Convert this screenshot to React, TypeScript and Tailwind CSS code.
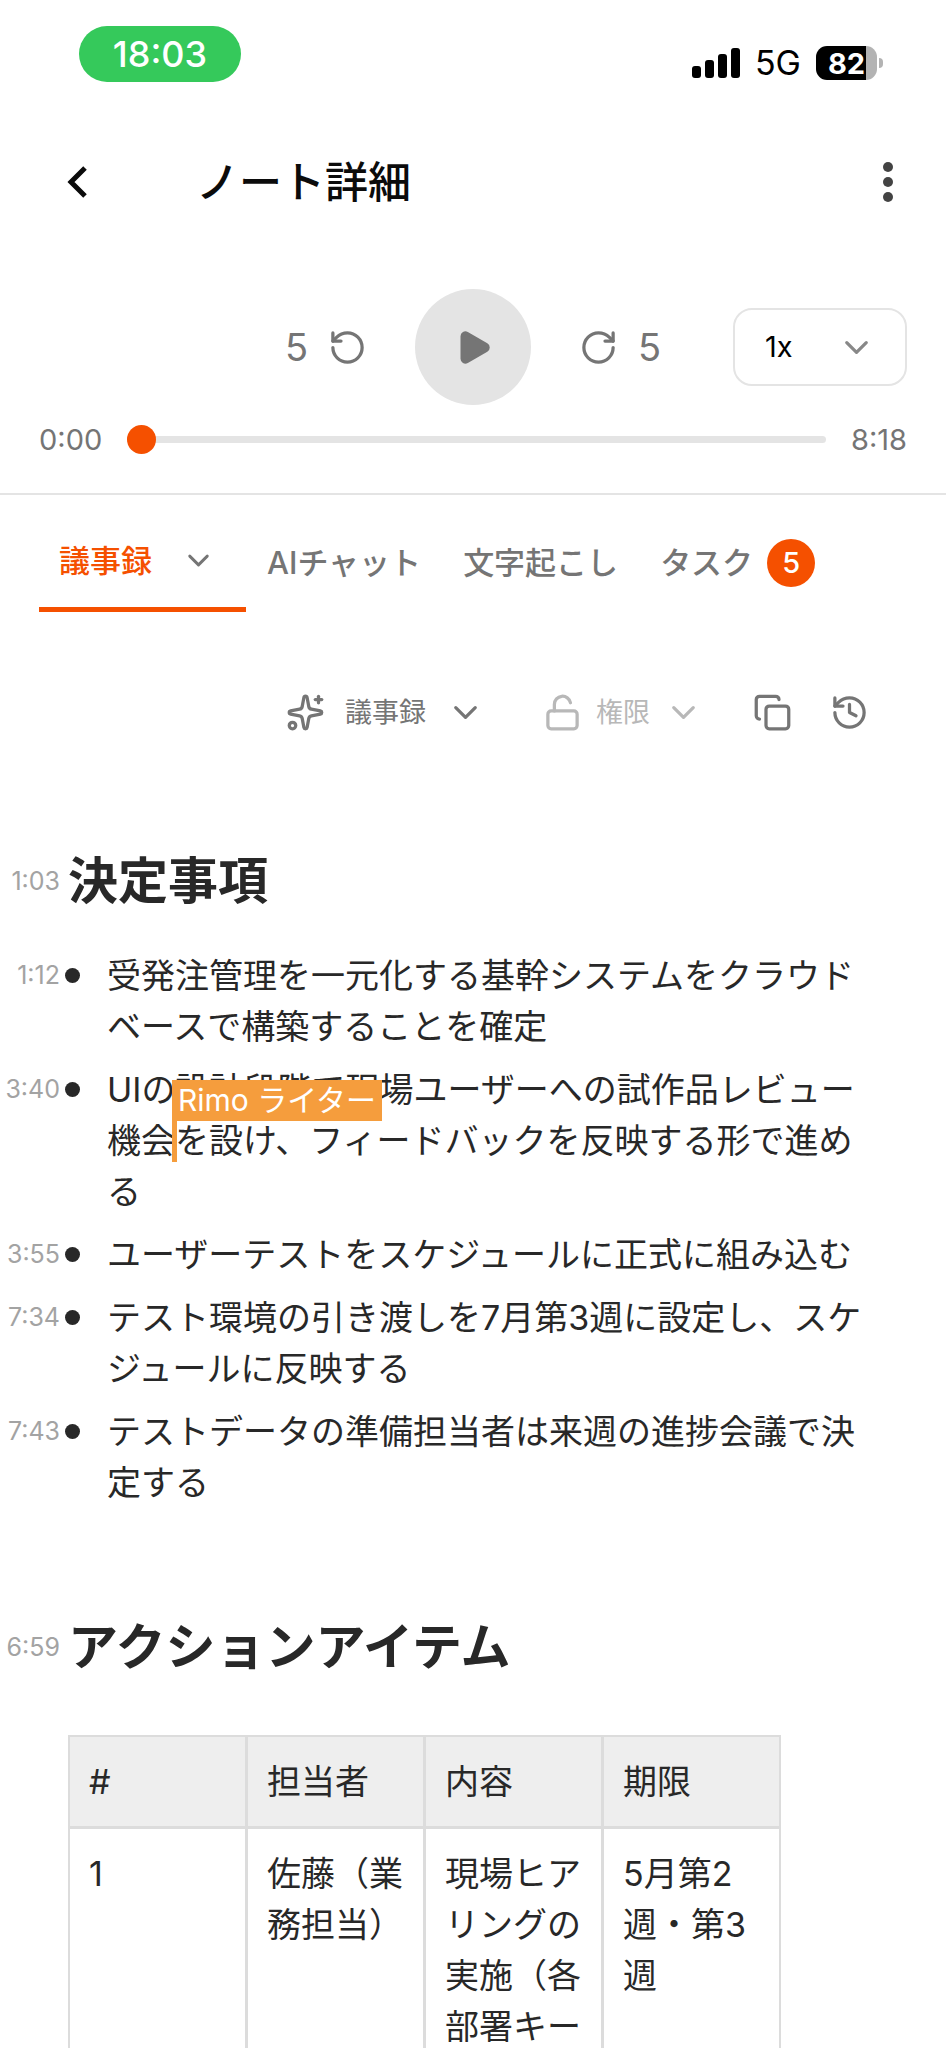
import { useState } from 'react'
import {
  ChevronDown,
  Copy,
  History,
  LockOpen,
  Play,
  RotateCcw,
  RotateCw,
  Sparkles,
} from 'lucide-react'

const decisions = [
  { time: '1:12', text: '受発注管理を一元化する基幹システムをクラウドベースで構築することを確定' },
  {
    time: '3:40',
    text: 'UIの設計段階で現場ユーザーへの試作品レビュー機会',
    rest: 'を設け、フィードバックを反映する形で進める',
  },
  { time: '3:55', text: 'ユーザーテストをスケジュールに正式に組み込む' },
  { time: '7:34', text: 'テスト環境の引き渡しを7月第3週に設定し、スケジュールに反映する' },
  { time: '7:43', text: 'テストデータの準備担当者は来週の進捗会議で決定する' },
]

const columns = ['#', '担当者', '内容', '期限']

const actionItems = [['1', '佐藤（業務担当）', '現場ヒアリングの実施（各部署キー', '5月第2週・第3週']]

function StatusBar() {
  return (
    <div className="flex h-[110px] items-start justify-between pl-[79px] pr-[63px]">
      <div className="mt-[26px] flex h-[56px] w-[162px] items-center justify-center rounded-full bg-[#35c95b] text-[36px] font-medium leading-none text-white">
        18:03
      </div>
      <div className="mt-[46px] flex h-[34px] items-center">
        <svg width="48" height="32" viewBox="0 0 48 32" aria-hidden="true">
          <rect x="0" y="19" width="9" height="12" rx="3" />
          <rect x="13" y="13" width="9" height="18" rx="3" />
          <rect x="26" y="7" width="9" height="24" rx="3" />
          <rect x="39" y="1" width="9" height="30" rx="3" />
        </svg>
        <span className="ml-[15px] text-[34px] leading-none text-black">5G</span>
        <div className="ml-[15px] flex items-center gap-[2px]">
          <div className="flex h-[34px] w-[61px] items-center justify-center rounded-[11px] bg-[linear-gradient(to_right,#000_50px,#b3b3b3_50px)] text-[29px] font-bold leading-none text-white">
            82
          </div>
          <div className="h-[10px] w-1 rounded-r-full bg-[#b3b3b3]" />
        </div>
      </div>
    </div>
  )
}

function Header() {
  return (
    <header className="flex h-36 items-center px-[52px]">
      <button type="button" aria-label="戻る" className="flex w-[48px] justify-center">
        <svg width="48" height="48" viewBox="0 0 48 48" fill="none" stroke="#0b0b0b" strokeWidth="5">
          <path d="M33 10 19 24l14 14" />
        </svg>
      </button>
      <h1 className="ml-[96px] text-[43px] font-medium leading-none text-[#0b0b0b]">ノート詳細</h1>
      <button type="button" aria-label="メニュー" className="ml-auto">
        <svg width="12" height="40" viewBox="0 0 12 40" fill="#434343">
          <circle cx="6" cy="5" r="5" />
          <circle cx="6" cy="20" r="5" />
          <circle cx="6" cy="35" r="5" />
        </svg>
      </button>
    </header>
  )
}

function Player() {
  const [position, setPosition] = useState(0)

  return (
    <section className="border-b-2 border-[#e4e4e4] px-[39px] pb-5 pt-[35px] text-[#757575]">
      <div className="grid grid-cols-[1fr_auto_1fr] items-center gap-12">
        <button type="button" className="flex items-center gap-5 justify-self-end text-[38px] leading-none">
          5
          <RotateCcw size={39} />
        </button>
        <button
          type="button"
          aria-label="再生"
          className="flex size-[116px] items-center justify-center rounded-full bg-[#e4e4e4]"
        >
          <Play size={39} fill="currentColor" />
        </button>
        <div className="flex items-center justify-between">
          <button type="button" className="flex items-center gap-5 text-[38px] leading-none">
            <RotateCw size={39} />5
          </button>
          <div className="relative">
            <select
              aria-label="再生速度"
              className="h-[78px] w-[174px] appearance-none rounded-[19px] border-2 border-[#e4e4e4] bg-white pl-[30px] text-[29px] text-black"
            >
              <option>1x</option>
            </select>
            <ChevronDown
              size={39}
              className="pointer-events-none absolute right-[31px] top-5 text-[#888888]"
            />
          </div>
        </div>
      </div>

      <div className="flex h-[68px] items-center gap-[25px] text-[29px] leading-none">
        <span>0:00</span>
        <input
          type="range"
          aria-label="再生位置"
          min={0}
          max={498}
          value={position}
          onChange={(e) => setPosition(Number(e.target.value))}
          className="h-[7px] min-w-0 flex-1 appearance-none rounded-full bg-[#e4e4e4] [&::-webkit-slider-thumb]:size-[29px] [&::-webkit-slider-thumb]:appearance-none [&::-webkit-slider-thumb]:rounded-full [&::-webkit-slider-thumb]:bg-[#f55000]"
        />
        <span>8:18</span>
      </div>
    </section>
  )
}

function Tabs() {
  return (
    <nav className="flex h-[117px] px-[39px] text-[31px] font-medium leading-none text-[#757575]">
      <button
        type="button"
        className="flex items-center gap-[29px] border-b-[5px] border-[#f55000] pl-5 pr-[30px] pt-[18px] text-[#f55000]"
      >
        議事録
        <ChevronDown size={35} className="text-[#757575]" />
      </button>
      <button type="button" className="px-[21px] pt-[18px]">
        AIチャット
      </button>
      <button type="button" className="px-[21px] pt-[18px]">
        文字起こし
      </button>
      <button type="button" className="flex items-center gap-[14px] px-[21px] pt-[18px]">
        タスク
        <span className="flex size-12 items-center justify-center rounded-full bg-[#f55000] text-[29px] text-white">
          5
        </span>
      </button>
    </nav>
  )
}

function Toolbar() {
  return (
    <div className="flex h-[200px] items-center justify-end pr-[77px] text-[27px] leading-none text-[#757575]">
      <button type="button" className="flex items-center gap-5">
        <Sparkles size={39} />
        議事録
        <ChevronDown size={39} />
      </button>
      <button type="button" disabled className="ml-[58px] flex items-center gap-[14px] text-[#b8b8b8]">
        <LockOpen size={39} />
        権限
        <ChevronDown size={39} />
      </button>
      <button type="button" aria-label="コピー" className="ml-[50px]">
        <Copy size={39} />
      </button>
      <button type="button" aria-label="履歴" className="ml-[38px]">
        <History size={39} />
      </button>
    </div>
  )
}

function Timestamp({ time }: { time: string }) {
  return <span className="w-[60px] shrink-0 text-right text-[25px] text-[#a3a3a3]">{time}</span>
}

// Collaborator's caret with the name label over the text
function RemoteCursor({ name }: { name: string }) {
  return (
    <span className="relative inline-block h-[51px] w-0 align-top">
      <span className="absolute -left-[3px] -top-[35px] h-[82px] w-[5px] bg-[#f59d3d]" />
      <span className="absolute -left-[3px] -top-[35px] h-[41px] whitespace-nowrap bg-[#f59d3d] px-[6px] text-[30px] leading-[41px] text-white">
        {name}
      </span>
    </span>
  )
}

function Heading({ time, children }: { time: string; children: string }) {
  return (
    <div className="flex items-center leading-[75px]">
      <Timestamp time={time} />
      <h2 className="ml-2 text-[50px] font-bold">{children}</h2>
    </div>
  )
}

export default function App() {
  return (
    <div
      lang="ja"
      className="h-screen overflow-hidden bg-white font-['Inter','Noto_Sans_CJK_JP',sans-serif] text-[#282828]"
    >
      <StatusBar />
      <Header />
      <Player />
      <Tabs />
      <Toolbar />

      <main className="pr-[70px] pt-8 text-[34px] leading-[51px]">
        <Heading time="1:03">決定事項</Heading>
        <ul className="mt-[31px] space-y-3">
          {decisions.map((item) => (
            <li key={item.time} className="flex">
              <Timestamp time={item.time} />
              <span className="ml-[5px] mt-[18px] size-[15px] shrink-0 rounded-full bg-[#282828]" />
              <p className="ml-[27px]">
                {item.text}
                {item.rest && <RemoteCursor name="Rimo ライター" />}
                {item.rest}
              </p>
            </li>
          ))}
        </ul>

        <div className="mt-[102px]">
          <Heading time="6:59">アクションアイテム</Heading>
        </div>
        <table className="ml-[68px] mt-[50px] w-[713px] table-fixed border-separate border-spacing-0 border-2 border-[#dcdcdc]">
          <thead>
            <tr className="bg-[#eeeeee] text-left">
              {columns.map((column) => (
                <th
                  key={column}
                  className="w-[178px] border-b-[3px] border-r-[3px] border-[#dcdcdc] p-[19px] font-normal last:w-auto last:border-r-0"
                >
                  {column}
                </th>
              ))}
            </tr>
          </thead>
          <tbody>
            {actionItems.map((row) => (
              <tr key={row[0]} className="align-top">
                {row.map((cell) => (
                  <td key={cell} className="border-r-[3px] border-[#dcdcdc] p-[19px] last:border-r-0">
                    {cell}
                  </td>
                ))}
              </tr>
            ))}
          </tbody>
        </table>
      </main>
    </div>
  )
}
